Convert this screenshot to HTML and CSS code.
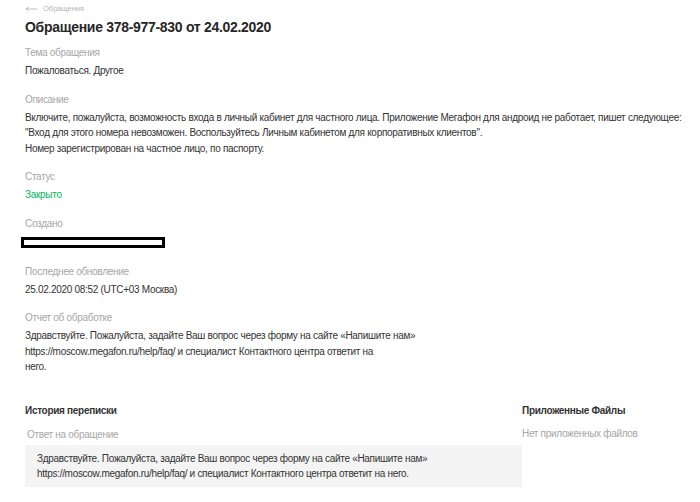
FILE: index.html
```html
<!DOCTYPE html>
<html lang="ru">
<head>
<meta charset="utf-8">
<title>Обращение 378-977-830</title>
<link rel="stylesheet" href="styles.css">
</head>
<body>
<div class="page">
  <div class="crumb">
    <svg class="crumb-arrow" width="13" height="6" viewBox="0 0 13 6"><path d="M3.5 0.8 L1 3 L3.5 5.2 M1 3 H12.5" fill="none" stroke="#b5b5b5" stroke-width="0.9"/></svg>
    <span>Обращения</span>
  </div>
  <h1 class="title">Обращение 378-977-830 от 24.02.2020</h1>

  <section class="field">
    <div class="label">Тема обращения</div>
    <div class="value">Пожаловаться. Другое</div>
  </section>

  <section class="field">
    <div class="label">Описание</div>
    <div class="value">Включите, пожалуйста, возможность входа в личный кабинет для частного лица. Приложение Мегафон для андроид не работает, пишет следующее:<br>"Вход для этого номера невозможен. Воспользуйтесь Личным кабинетом для корпоративных клиентов".<br>Номер зарегистрирован на частное лицо, по паспорту.</div>
  </section>

  <section class="field">
    <div class="label">Статус</div>
    <div class="value status">Закрыто</div>
  </section>

  <section class="field">
    <div class="label">Создано</div>
    <div class="redacted"></div>
  </section>

  <section class="field">
    <div class="label">Последнее обновление</div>
    <div class="value">25.02.2020 08:52 (UTC+03 Москва)</div>
  </section>

  <section class="field">
    <div class="label">Отчет об обработке</div>
    <div class="value report">Здравствуйте. Пожалуйста, задайте Ваш вопрос через форму на сайте «Напишите нам» https://moscow.megafon.ru/help/faq/ и специалист Контактного центра ответит на<br>него.</div>
  </section>

  <div class="bottom">
    <div class="history">
      <div class="subhead">История переписки</div>
      <div class="label reply-label">Ответ на обращение</div>
      <div class="reply">Здравствуйте. Пожалуйста, задайте Ваш вопрос через форму на сайте «Напишите нам» https://moscow.megafon.ru/help/faq/ и специалист Контактного центра ответит на него.</div>
    </div>
    <div class="files">
      <div class="subhead">Приложенные Файлы</div>
      <div class="label files-empty">Нет приложенных файлов</div>
    </div>
  </div>
</div>
</body>
</html>
```

FILE: styles.css
```css
html, body {
  margin: 0;
  padding: 0;
  background: #ffffff;
}

body {
  font-family: "Liberation Sans", Arial, sans-serif;
  color: #333333;
  font-size: 10px;
  letter-spacing: -0.3px;
}

.page {
  padding-left: 25px;
}

.crumb {
  height: 15px;
  padding-top: 1px;
  display: flex;
  align-items: center;
  gap: 5px;
  font-size: 7.5px;
  letter-spacing: 0;
  color: #b5b5b5;
}

.crumb-arrow {
  display: block;
}

.title {
  margin: 1px 0 0;
  font-size: 14px;
  line-height: 20px;
  font-weight: bold;
  letter-spacing: -0.3px;
  color: #262626;
}

.field {
  margin-top: 8px;
}

.field + .field {
  margin-top: 13px;
}

.label {
  line-height: 16px;
  color: #a6a6a6;
}

.value {
  margin-top: 2px;
  line-height: 15.5px;
  color: #333333;
}

.status {
  color: #00b956;
}

.redacted {
  margin: 5px 0 16px -4px;
  width: 138px;
  height: 5px;
  border: 3px solid #000000;
  background: #ffffff;
}

.report {
  max-width: 400px;
}

.bottom {
  display: flex;
  margin-top: 28px;
}

.history {
  width: 497px;
  flex: none;
}

.subhead {
  line-height: 16px;
  font-weight: bold;
  color: #333333;
}

.reply-label {
  margin-top: 8px;
  padding-left: 2px;
}

.reply {
  margin-top: 2px;
  padding: 6px 12px;
  background: #f4f4f4;
  line-height: 15px;
  color: #333333;
}

.files-empty {
  margin-top: 7px;
}
```
